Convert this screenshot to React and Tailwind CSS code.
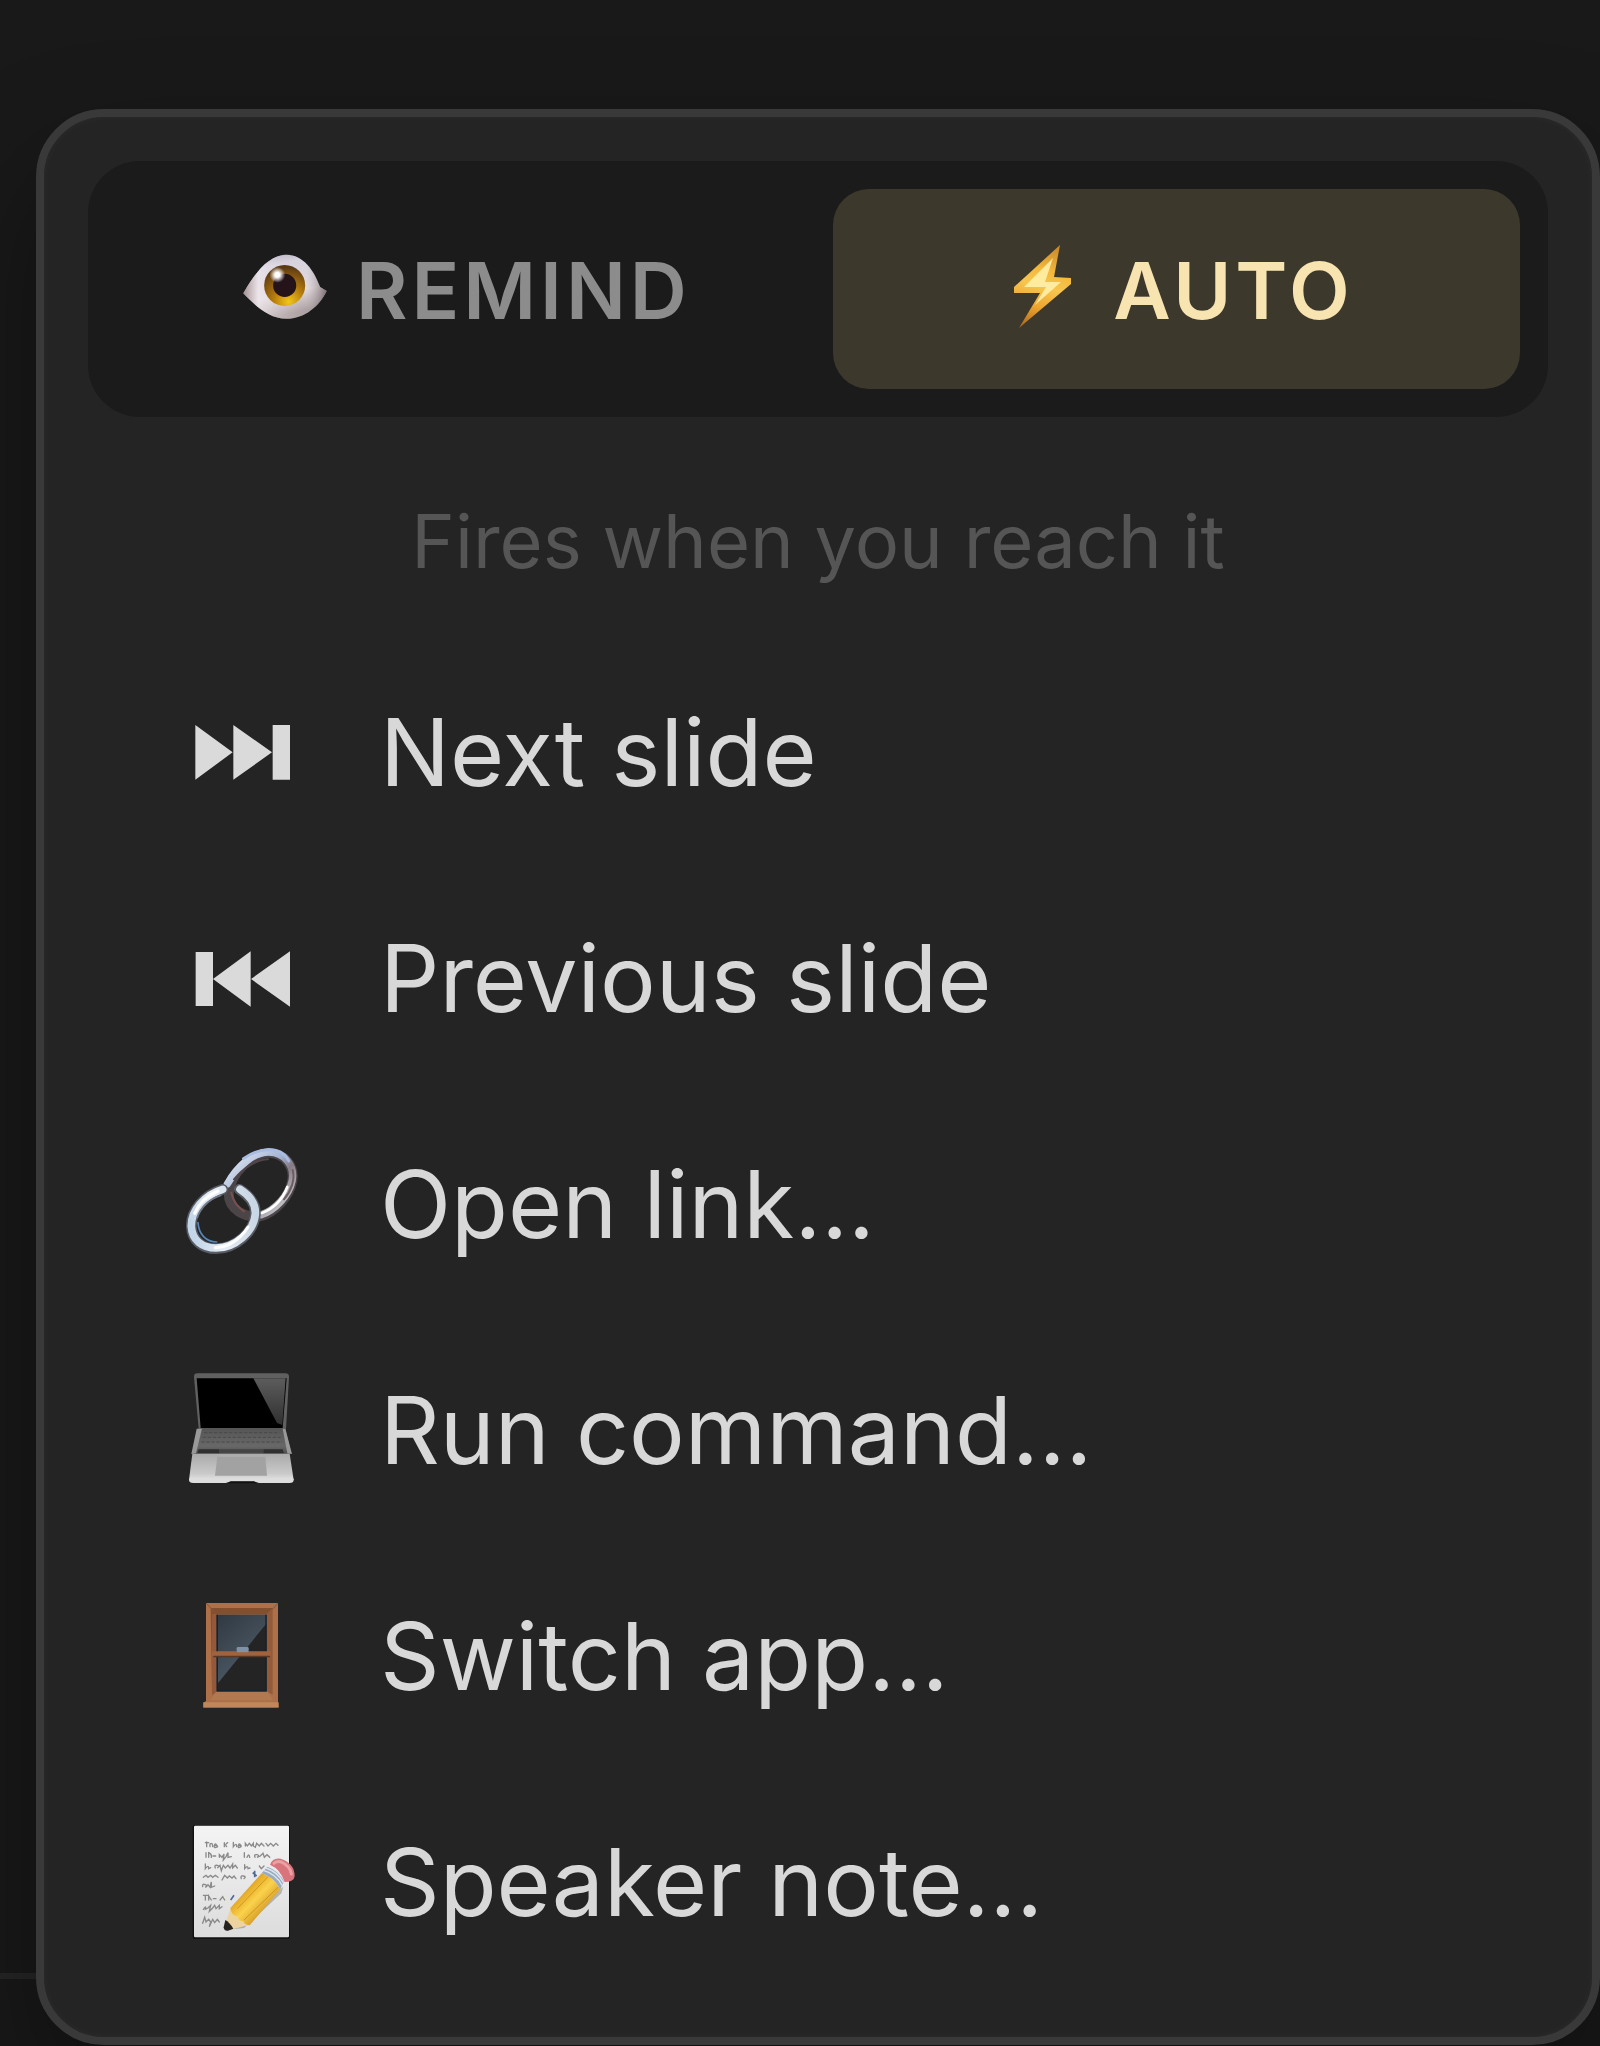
import React, { useState } from "react";
import clsx from "clsx";

const EyeIcon = () => (
  <svg viewBox="112 101 260 212" className="w-[86px] shrink-0" aria-hidden="true">
    <defs>
      <linearGradient id="eyeWhite" x1="0" y1="0" x2="0.3" y2="1">
        <stop offset="0" stopColor="#8f8aa6" />
        <stop offset="0.25" stopColor="#d9d5e2" />
        <stop offset="0.7" stopColor="#e6dfe2" />
        <stop offset="1" stopColor="#a99c9c" />
      </linearGradient>
      <linearGradient id="eyeSide" x1="0" y1="0" x2="1" y2="0">
        <stop offset="0" stopColor="#8a6f70" />
        <stop offset="0.18" stopColor="#f0eaee" stopOpacity="0.9" />
        <stop offset="0.75" stopColor="#c9bfc6" stopOpacity="0.2" />
        <stop offset="1" stopColor="#56484b" />
      </linearGradient>
      <radialGradient id="eyeIris" cx="0.6" cy="0.9" r="0.85">
        <stop offset="0" stopColor="#f2c61c" />
        <stop offset="0.45" stopColor="#b47a0c" />
        <stop offset="1" stopColor="#5c3a14" />
      </radialGradient>
      <radialGradient id="eyeGlint">
        <stop offset="0.3" stopColor="#fff" />
        <stop offset="1" stopColor="#fff" stopOpacity="0" />
      </radialGradient>
    </defs>
    <path d="M116 220C148 164 190 103 246 103c52 0 84 48 102 98l20 12c-22 46-66 84-122 84-54 0-98-44-130-77z" fill="url(#eyeWhite)" />
    <path d="M116 220C148 164 190 103 246 103c52 0 84 48 102 98l20 12c-22 46-66 84-122 84-54 0-98-44-130-77z" fill="url(#eyeSide)" opacity="0.7" />
    <circle cx="241" cy="196" r="62" fill="url(#eyeIris)" />
    <circle cx="241" cy="196" r="35" fill="#25131a" />
    <circle cx="219" cy="164" r="24" fill="url(#eyeGlint)" />
  </svg>
);

const BoltIcon = () => (
  <svg viewBox="0 0 86 90" className="w-[86px] shrink-0" aria-hidden="true">
    <defs>
      <linearGradient id="bolt" x1="0.6" y1="0" x2="0.4" y2="1">
        <stop offset="0" stopColor="#c98a2c" />
        <stop offset="0.3" stopColor="#f3b83c" />
        <stop offset="0.5" stopColor="#f6c650" />
        <stop offset="0.75" stopColor="#eda62f" />
        <stop offset="1" stopColor="#b3701f" />
      </linearGradient>
    </defs>
    <path d="M61 1 55 33 72 34V40L20 84 41 49 15 49V43z" fill="url(#bolt)" />
    <path d="M54 14 25 43 47 43 36 61 62 38 46 38z" fill="#fff3ae" opacity="0.85" />
  </svg>
);

const NextIcon = () => (
  <svg viewBox="72 9 342 342" className="w-full" aria-hidden="true">
    <path d="M106 105l112 82-112 82zM220 105l116 82-116 82zM338 105h52v164h-52z" fill="#dadada" />
  </svg>
);

const PreviousIcon = () => (
  <svg viewBox="72 687 342 342" className="w-full" aria-hidden="true">
    <path d="M107 786h52v162h-52zM272 784v166l-113-83zM390 784v166l-117-83z" fill="#dadada" />
  </svg>
);

const LinkIcon = () => (
  <svg viewBox="42 45 342 342" className="w-full overflow-visible" fill="none" aria-hidden="true">
    <defs>
      <linearGradient id="chainTop" x1="0" y1="0" x2="1" y2="1">
        <stop offset="0" stopColor="#e8f0f8" />
        <stop offset="0.45" stopColor="#a3b2d4" />
        <stop offset="0.6" stopColor="#857b84" />
        <stop offset="1" stopColor="#e2e8ee" />
      </linearGradient>
      <linearGradient id="chainLow" x1="0" y1="0.6" x2="1" y2="0.4">
        <stop offset="0" stopColor="#c3d5e8" />
        <stop offset="0.4" stopColor="#e6edf5" />
        <stop offset="1" stopColor="#c9d6e4" />
      </linearGradient>
    </defs>
    <g strokeLinecap="round" strokeLinejoin="round">
      <path d="M176 190C182 128 246 68 296 68c48 0 80 42 70 88-9 42-48 90-92 102-50 8-98-20-98-68z" stroke="#4b4548" strokeWidth="30" />
      <path d="M172 162C204 106 252 66 296 66c48 0 80 42 70 88-9 42-52 88-92 100" stroke="url(#chainTop)" strokeWidth="22" />
      <path d="M192 148c28-34 68-60 102-60" stroke="#51454a" strokeWidth="6" />
      <path d="M368 120c8 28-4 62-26 88" stroke="#6d5d60" strokeWidth="6" />
      <path d="M184 188c5 28 20 44 38 56" stroke="#7a504e" strokeWidth="6" />
      <path d="M158 178c-54 16-96 64-94 112 2 40 32 66 74 66 58 0 114-50 118-102 3-36-20-58-48-76" stroke="#575b64" strokeWidth="32" />
      <path d="M158 178c-54 16-96 64-94 112 2 40 32 64 74 64 58 0 114-50 118-102 2-34-18-56-46-74" stroke="url(#chainLow)" strokeWidth="23" />
      <path d="M84 278c2 34 24 58 56 58" stroke="#5686b8" strokeWidth="5" />
      <path d="M82 262c10-32 38-56 70-66" stroke="#727986" strokeWidth="5" />
      <path d="M74 250c12-30 40-54 70-67" stroke="#fff" strokeWidth="9" />
      <path d="M136 353c44-2 76-28 98-62" stroke="#fff" strokeWidth="9" />
      <path d="M220 86c22-16 48-26 76-27 28 0 48 10 60 34" stroke="#a9bce2" strokeWidth="8" />
      <path d="M276 249c36-14 62-42 76-78" stroke="#fff" strokeWidth="8" />
    </g>
  </svg>
);

const LaptopIcon = () => (
  <svg viewBox="42 33 342 342" className="w-full" aria-hidden="true">
    <defs>
      <linearGradient id="screenGlare" x1="0" y1="0" x2="0" y2="1">
        <stop offset="0" stopColor="#5c5c5c" />
        <stop offset="1" stopColor="#303030" />
      </linearGradient>
      <linearGradient id="keyboard" x1="0" y1="0" x2="0" y2="1">
        <stop offset="0" stopColor="#555" />
        <stop offset="0.7" stopColor="#686868" />
        <stop offset="1" stopColor="#4c4c4c" />
      </linearGradient>
      <linearGradient id="palmRest" x1="0" y1="0" x2="0" y2="1">
        <stop offset="0" stopColor="#aaa" />
        <stop offset="0.75" stopColor="#c9c9c9" />
        <stop offset="1" stopColor="#e2e2e2" />
      </linearGradient>
    </defs>
    <path d="M82 40h264q12 0 11 12l-9 154H86L72 52q-1-12 10-12z" fill="#606060" />
    <path d="M80 55h270l-12 149H92z" fill="#000" />
    <path d="M250 55h97l-10 140-16-6z" fill="url(#screenGlare)" />
    <path d="M86 204h260l18 78H66z" fill="url(#keyboard)" />
    <path d="M80 206l-16 76 14-2 18-74zM338 206l14 74 14 2-20-76z" fill="#999" />
    <path d="M102 218h226M98 232h234M94 246h242" stroke="#4a4a4a" strokeWidth="3" strokeDasharray="10 5" />
    <path d="M86 268h62v12H82zM280 268h58l4 12h-62z" fill="#2f2f2f" />
    <path d="M148 268h132v10H148z" fill="#444" />
    <path d="M67 281h292l12 79H57z" fill="url(#palmRest)" />
    <path d="M142 290h144l5 57H135z" fill="#a2a2a2" />
    <path d="M57 356h314v4q0 9-12 9h-92l-12-4h-76l-12 4H70q-13 0-13-9z" fill="#ddd" />
    <path d="M172 370h90l-10-6h-70z" fill="#111" />
  </svg>
);

const WindowIcon = () => (
  <svg viewBox="42 21 342 342" className="w-full" aria-hidden="true">
    <defs>
      <linearGradient id="windowPane" x1="0" y1="0" x2="0.6" y2="1">
        <stop offset="0" stopColor="#303942" />
        <stop offset="1" stopColor="#4f5d69" />
      </linearGradient>
    </defs>
    <path d="M108 39h216v300l2 14H100v-14l8-6z" fill="#ad7049" />
    <path d="M122 54h186l-10 18H140v232H126z" fill="#83502f" />
    <path d="M108 39l30 32M324 39l-28 32" stroke="#8a5536" strokeWidth="3" />
    <path d="M290 72l18-18v260l-18-10z" fill="#945b3a" />
    <path d="M126 72h14v234l-14 10z" fill="#94583a" />
    <path d="M140 74h150v232H140z" fill="#242424" />
    <path d="M140 74h150v26L140 284z" fill="url(#windowPane)" />
    <path d="M140 74h4v230h-4zM286 74h4v230h-4zM140 300h150v5H140z" fill="#14232e" />
    <path d="M126 184h176v14H126z" fill="#a0633f" />
    <path d="M130 197h170v5H130z" fill="#583724" />
    <rect x="200" y="171" width="36" height="16" rx="4" fill="#8292a5" />
    <path d="M138 305h154l18 26H122z" fill="#b27950" />
    <path d="M100 337h226v15H100z" fill="#c0875b" />
  </svg>
);

const NoteIcon = () => (
  <svg viewBox="42 39 342 342" className="w-full overflow-visible" aria-hidden="true">
    <defs>
      <linearGradient id="paper" x1="0" y1="0" x2="0" y2="1">
        <stop offset="0" stopColor="#f4f4f4" />
        <stop offset="1" stopColor="#dcdcdc" />
      </linearGradient>
      <linearGradient id="pencil" x1="0" y1="0" x2="1" y2="1">
        <stop offset="0.3" stopColor="#e0a321" />
        <stop offset="0.5" stopColor="#fbd24c" />
        <stop offset="0.75" stopColor="#cf9420" />
      </linearGradient>
    </defs>
    <rect x="68" y="45" width="292" height="342" rx="6" fill="#111" />
    <rect x="72" y="47" width="285" height="335" rx="4" fill="url(#paper)" />
    <g fill="none" stroke="#8a8a8a" strokeWidth="4" strokeLinecap="round">
      <path d="M110 96v14m-4-12h10m4 12v-8q8-6 8 8m5-3h8q-6-10-8 0t10 3M163 98v12m10-12q-10 6-3 12M190 97v13q10-14 10 0m5-3h8q-6-10-8 0t8 3M226 108v-8l6 8 6-8 6 8 6-8v8l6 4 4-12 8 8 6-8 8 8m6-8 6 8 8-8 8 8 8-8 6 6" />
      <path d="M108 128v14m8 0v-14q10 4 8 14m5-4h8M148 142v-8l8 8 6-10-2 18 8-10 6-12v14l10-2M223 128v14m8 0q6-14 8 0M255 142q-4-10 6-8t0 8l10-4 8-8 4 12 8-8 8 8" />
      <path d="M106 162v14q10-14 10 0l6-3M136 174q-4-10 6-8t0 8l8-8 4 16 6-16 6 8 8-8 6 8 8-12v12l8-8 6 8M224 164v12q10-12 10 0l6-2M268 168l6 8 8-8" />
      <path d="M100 202l8-6 6 6 8-6 6 6 8-6 8 6M156 210l8-14 8 8 6-6 8 6 6-6 6 8M214 206q-4-10 6-8t2 8M98 230q-2-10 8-6t0 8l8-8 6 8 4-16v16l10-4M100 256h14m-8 0v14m10 0v-12l8 12m6-4h8M150 270l8-10 6 10M100 298q10-14 6 0l8-4 8-8-4 18 10-10 6-8 4 10 10-10v10l8-6M98 340l6-18 4 14 8-8 6 8-4 14 10-22 6 10 8-10 6 8" />
    </g>
    <path d="M248 188l12 10m-6-16v20M192 256l-10 14" stroke="#4d6a94" strokeWidth="5" />
    <path d="M188 358L340 230l-6 20L222 354z" fill="#555" opacity="0.35" />
    <path d="M162 352l20-58 56 50-58 16q-16 2-18-8z" fill="#ecd3a0" />
    <path d="M161 352l5-22q12 6 24 26l-16 6q-12 2-13-10z" fill="#25221f" />
    <path d="M181 294l94-104q36 10 56 48l-92 108q-13 0-20-13-12 2-17-14-18-2-21-25z" fill="url(#pencil)" />
    <path d="M202 296L294 200M222 330L324 232" stroke="#c48916" strokeWidth="3" opacity="0.7" />
    <path d="M275 190l17-20q34 12 50 44l-11 24q-20-38-56-48z" fill="#9aabc0" />
    <path d="M282 182q36 10 54 44M288 174q36 12 52 44" stroke="#dfe5ee" strokeWidth="4" fill="none" />
    <path d="M300 164q8-22 32-18 42 14 42 52-2 18-30 18-12-38-44-52z" fill="#d8757c" />
    <path d="M312 160q10-8 22-4 26 12 30 36" stroke="#eda0a4" strokeWidth="9" fill="none" strokeLinecap="round" />
  </svg>
);

const modes = [
  { key: "remind", label: "REMIND", icon: EyeIcon },
  { key: "auto", label: "AUTO", icon: BoltIcon },
];

const actions = [
  { label: "Next slide", icon: NextIcon },
  { label: "Previous slide", icon: PreviousIcon },
  { label: "Open link...", icon: LinkIcon },
  { label: "Run command...", icon: LaptopIcon },
  { label: "Switch app...", icon: WindowIcon },
  { label: "Speaker note...", icon: NoteIcon },
];

const App = () => {
  const [mode, setMode] = useState("auto");

  return (
    <div className="relative min-h-screen overflow-hidden bg-[#191919] pt-[109px] pb-px pl-9 font-['Inter','Liberation_Sans',sans-serif]">
      {/* footer edge of the page behind the menu */}
      <div className="absolute inset-x-0 bottom-0 h-[73px] border-t-[6px] border-[#262626]" />

      <div className="relative rounded-[68px] border-8 border-[#393939] bg-[#242424] p-11 shadow-[0_60px_120px_rgba(0,0,0,0.4),inset_0_0_8px_rgba(255,255,255,0.04)]">
        <div className="grid grid-cols-[51fr_50fr] gap-4 rounded-[52px] bg-[#1b1b1b] p-7">
          {modes.map(({ key, label, icon: Icon }) => (
            <button
              key={key}
              type="button"
              aria-pressed={mode === key}
              onClick={() => setMode(key)}
              className={clsx(
                "flex h-[200px] items-center justify-center gap-7 rounded-[36px] text-[79px] font-semibold tracking-wider",
                mode === key ? "bg-[#3d382c] text-[#f7e4b1]" : "text-[#8c8c8c]"
              )}
            >
              <Icon />
              <span className="pt-0.5">{label}</span>
            </button>
          ))}
        </div>

        <p className="pt-[76px] pb-12 text-center text-[74px] leading-[96px] text-[#555]">
          Fires when you reach it
        </p>

        <ul>
          {actions.map(({ label, icon: Icon }) => (
            <li key={label}>
              <button
                type="button"
                className="flex h-[226px] w-full items-center gap-[82px] px-24 text-left text-[93px] text-[#d8d8d8]"
              >
                <span className="w-[114px] shrink-0">
                  <Icon />
                </span>
                <span className="pt-1.5">{label}</span>
              </button>
            </li>
          ))}
        </ul>
      </div>
    </div>
  );
};

export default App;
